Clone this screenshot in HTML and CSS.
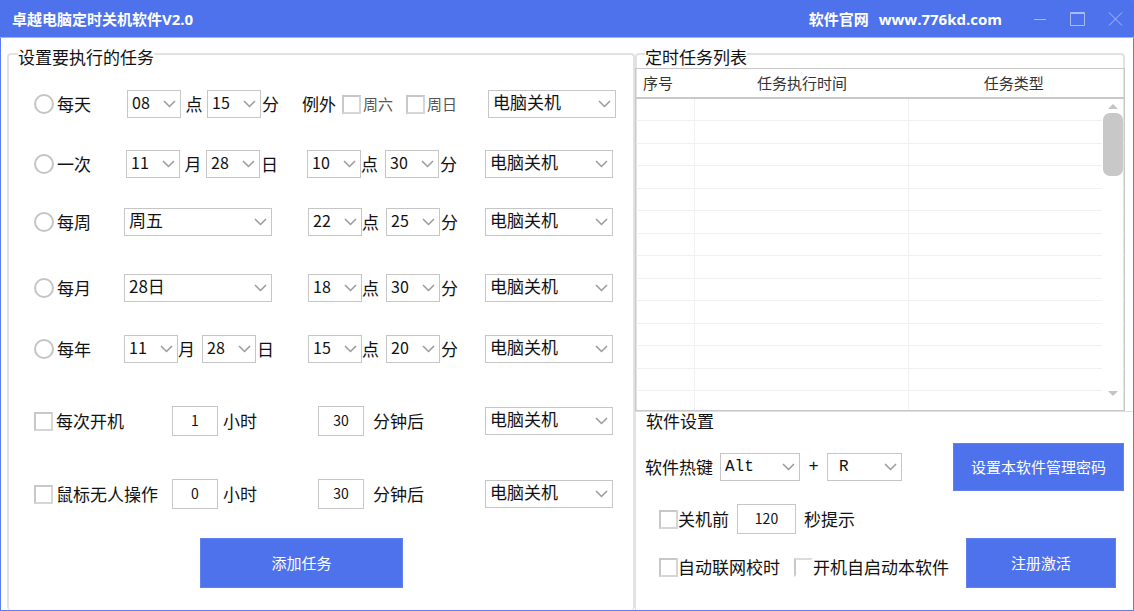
FILE: index.html
```html
<!DOCTYPE html>
<html lang="zh-CN">
<head>
<meta charset="utf-8">
<title>卓越电脑定时关机软件V2.0</title>
<link rel="stylesheet" href="styles.css">
</head>
<body>
<div class="window">
  <header class="titlebar">
    <h1 class="title">卓越电脑定时关机软件V2.0</h1>
    <div class="site"><span>软件官网</span><a href="#">www.776kd.com</a></div>
    <div class="controls">
      <button class="ctl" type="button" aria-label="最小化"><svg width="16" height="16" viewBox="0 0 16 16"><path d="M2 8.500h12"/></svg></button>
      <button class="ctl" type="button" aria-label="最大化"><svg width="16" height="16" viewBox="0 0 16 16"><path d="M.5 1.500h14v13H.5zM.5 2.500h14"/></svg></button>
      <button class="ctl" type="button" aria-label="关闭"><svg width="16" height="16" viewBox="0 0 16 16"><path d="M1 1.500l13 13M14 1.500l-13 13"/></svg></button>
    </div>
  </header>

  <main class="main">
    <fieldset class="group tasks">
      <legend class="legend">设置要执行的任务</legend>

      <div class="row row-daily">
        <label class="opt"><input class="radio" type="radio" name="mode">每天</label>
        <div class="cell">
          <select class="combo num" aria-label="每天 点"><option>08</option></select><span class="unit unit-mid">点</span>
          <select class="combo num" aria-label="每天 分"><option>15</option></select><span class="unit-end">分</span>
        </div>
        <div class="cell except">
          <span>例外</span>
          <label class="opt small"><input class="check" type="checkbox">周六</label>
          <label class="opt small"><input class="check" type="checkbox">周日</label>
        </div>
        <select class="combo action" aria-label="每天 任务类型"><option>电脑关机</option></select>
      </div>

      <div class="row row-once">
        <label class="opt"><input class="radio" type="radio" name="mode">一次</label>
        <div class="cell">
          <select class="combo num" aria-label="一次 月"><option>11</option></select><span class="unit unit-mid">月</span>
          <select class="combo num" aria-label="一次 日"><option>28</option></select><span class="unit-end">日</span>
        </div>
        <div class="cell">
          <select class="combo num" aria-label="一次 点"><option>10</option></select><span class="unit">点</span>
          <select class="combo num" aria-label="一次 分"><option>30</option></select><span class="unit-end">分</span>
        </div>
        <select class="combo action" aria-label="一次 任务类型"><option>电脑关机</option></select>
      </div>

      <div class="row row-weekly">
        <label class="opt"><input class="radio" type="radio" name="mode">每周</label>
        <div class="cell">
          <select class="combo wide" aria-label="星期"><option>周五</option></select>
        </div>
        <div class="cell">
          <select class="combo num" aria-label="每周 点"><option>22</option></select><span class="unit">点</span>
          <select class="combo num" aria-label="每周 分"><option>25</option></select><span class="unit-end">分</span>
        </div>
        <select class="combo action" aria-label="每周 任务类型"><option>电脑关机</option></select>
      </div>

      <div class="row row-monthly">
        <label class="opt"><input class="radio" type="radio" name="mode">每月</label>
        <div class="cell">
          <select class="combo wide" aria-label="日期"><option>28日</option></select>
        </div>
        <div class="cell">
          <select class="combo num" aria-label="每月 点"><option>18</option></select><span class="unit">点</span>
          <select class="combo num" aria-label="每月 分"><option>30</option></select><span class="unit-end">分</span>
        </div>
        <select class="combo action" aria-label="每月 任务类型"><option>电脑关机</option></select>
      </div>

      <div class="row row-yearly">
        <label class="opt"><input class="radio" type="radio" name="mode">每年</label>
        <div class="cell">
          <select class="combo num" aria-label="每年 月"><option>11</option></select><span class="unit">月</span>
          <select class="combo num" aria-label="每年 日"><option>28</option></select><span class="unit-end">日</span>
        </div>
        <div class="cell">
          <select class="combo num" aria-label="每年 点"><option>15</option></select><span class="unit">点</span>
          <select class="combo num" aria-label="每年 分"><option>20</option></select><span class="unit-end">分</span>
        </div>
        <select class="combo action" aria-label="每年 任务类型"><option>电脑关机</option></select>
      </div>

      <div class="row row-delay row-boot">
        <label class="opt"><input class="check" type="checkbox">每次开机</label>
        <label class="delay"><input class="field" type="text" value="1">小时</label>
        <label class="delay minutes"><input class="field" type="text" value="30">分钟后</label>
        <select class="combo action" aria-label="每次开机 任务类型"><option>电脑关机</option></select>
      </div>

      <div class="row row-delay row-idle">
        <label class="opt"><input class="check" type="checkbox">鼠标无人操作</label>
        <label class="delay"><input class="field" type="text" value="0">小时</label>
        <label class="delay minutes"><input class="field" type="text" value="30">分钟后</label>
        <select class="combo action" aria-label="鼠标无人操作 任务类型"><option>电脑关机</option></select>
      </div>

      <button class="btn btn-add" type="button">添加任务</button>
    </fieldset>

    <div class="side">
      <fieldset class="group list">
        <legend class="legend legend-list">定时任务列表</legend>
        <div class="tablebox">
          <table class="table">
            <thead><tr><th class="c-no">序号</th><th class="c-time">任务执行时间</th><th class="c-type">任务类型</th></tr></thead>
            <tbody>
              <tr><td></td><td></td><td></td></tr>
              <tr><td></td><td></td><td></td></tr>
              <tr><td></td><td></td><td></td></tr>
              <tr><td></td><td></td><td></td></tr>
              <tr><td></td><td></td><td></td></tr>
              <tr><td></td><td></td><td></td></tr>
              <tr><td></td><td></td><td></td></tr>
              <tr><td></td><td></td><td></td></tr>
              <tr><td></td><td></td><td></td></tr>
              <tr><td></td><td></td><td></td></tr>
              <tr><td></td><td></td><td></td></tr>
              <tr><td></td><td></td><td></td></tr>
              <tr><td></td><td></td><td></td></tr>
              <tr><td></td><td></td><td></td></tr>
            </tbody>
          </table>
          <div class="scroll" aria-hidden="true">
            <svg class="arrow" width="10" height="5" viewBox="0 0 10 5"><path d="M0 5L5 0l5 5z"/></svg>
            <div class="thumb"></div>
            <svg class="arrow arrow-down" width="10" height="5" viewBox="0 0 10 5"><path d="M0 0h10L5 5z"/></svg>
          </div>
        </div>
      </fieldset>

      <section class="settings">
        <h2 class="heading">软件设置</h2>
        <div class="line hotkey">
          <label for="mod">软件热键</label>
          <select id="mod" class="combo mono mod"><option>Alt</option></select>
          <span class="plus">+</span>
          <select class="combo mono key" aria-label="热键字母"><option>R</option></select>
          <button class="btn btn-pass" type="button">设置本软件管理密码</button>
        </div>
        <div class="line notice">
          <label class="opt tight"><input class="check" type="checkbox">关机前</label>
          <label class="delay"><input class="field seconds" type="text" value="120">秒提示</label>
        </div>
        <div class="line extra">
          <label class="opt tight"><input class="check" type="checkbox">自动联网校时</label>
          <label class="opt tight auto"><input class="check check-open" type="checkbox">开机自启动本软件</label>
          <button class="btn btn-reg" type="button">注册激活</button>
        </div>
      </section>
    </div>
  </main>
</div>
</body>
</html>
```
FILE: styles.css
```css
* {
  box-sizing: border-box;
}

body {
  margin: 0;
  background: #fff;
  color: #111;
  font: 17px/22px "Noto Sans CJK SC", sans-serif;
}

button,
select,
input {
  margin: 0;
  font: inherit;
  color: inherit;
}

.window {
  display: flex;
  flex-direction: column;
  min-height: 100vh;
  border: 1px solid #5c7df0;
  border-top-color: #4d72eb;
}

/* Title bar */
.titlebar {
  display: flex;
  align-items: center;
  height: 37px;
  margin: 0 -1px;
  padding: 0 10px 0 12px;
  background: #4d72eb;
  border-bottom: 1px solid #9db3f6;
  color: #fff;
  font: bold 15px/22px "Open Sans", "Noto Sans CJK SC", sans-serif;
}

.title {
  flex: 1;
  margin: 0;
  font: inherit;
}

.site {
  display: flex;
  gap: 10px;
}

.site a {
  color: inherit;
  text-decoration: none;
}

.controls {
  display: flex;
  gap: 22px;
  margin-left: 30px;
}

.ctl {
  display: flex;
  padding: 0;
  border: 0;
  background: none;
}

.ctl svg {
  fill: none;
  stroke: #a9bbf7;
}

/* Two panes */
.main {
  flex: 1;
  display: grid;
  grid-template-columns: 628fr 498fr;
  padding: 1px 0 0 6px;
}

.group {
  min-width: 0;
  margin: 0;
  padding: 0;
  border: 2px solid #e2e2e2;
  border-radius: 4px;
}

.legend {
  margin-left: 9px;
  padding: 7px 0 0;
}

.tasks {
  border-bottom: 0;
}

/* Task rows */
.row {
  display: grid;
  grid-template-columns: 90px 184px 177px 1fr;
  align-items: center;
  height: 30px;
  margin-left: 25px;
}

.row-daily {
  grid-template-columns: 93px 175px 186px 1fr;
  margin-top: 21px;
}

.row-once {
  grid-template-columns: 92px 181px 178px 1fr;
  margin-top: 30px;
}

.row-weekly {
  margin-top: 28px;
}

.row-monthly {
  margin-top: 36px;
}

.row-yearly {
  margin-top: 31px;
}

.row-delay {
  grid-template-columns: 138px 146px 167px 1fr;
  margin-top: 42px;
}

.row-idle {
  margin-top: 43px;
}

.cell,
.delay,
.opt {
  display: flex;
  align-items: center;
  white-space: nowrap;
}

.opt {
  gap: 3px;
}

.delay {
  gap: 5px;
}

.minutes {
  gap: 9px;
}

.tight {
  gap: 0;
}

.except {
  gap: 6px;
}

.small {
  gap: 2px;
  margin-right: 7px;
  color: #555;
  font-size: 15px;
}

.unit {
  width: 24px;
}

.unit-mid {
  width: 26px;
  text-align: center;
}

.unit-end {
  margin-left: 1px;
}

.radio,
.check {
  flex: none;
  appearance: none;
  width: 20px;
  height: 20px;
  border: 2px solid #c4c4c4;
  background: #fff;
}

.radio {
  border-radius: 50%;
}

.check {
  width: 19px;
  height: 19px;
  border-color: #c8c8c8 #d6d6d6 #d6d6d6 #c8c8c8;
}

.check-open {
  border-color: #dcdcdc transparent transparent #c8c8c8;
}

.combo {
  appearance: none;
  height: 28px;
  padding: 0 20px 4px 4px;
  border: 1px solid #c6c6c6;
  border-radius: 0;
  background: #fff url("data:image/svg+xml,%3Csvg xmlns='http://www.w3.org/2000/svg' width='13' height='8'%3E%3Cpath d='M1 1l5.500 5.500L12 1' fill='none' stroke='%23999' stroke-width='1.500'/%3E%3C/svg%3E") no-repeat right 4px center;
  line-height: 22px;
}

.num {
  width: 54px;
  padding-right: 16px;
  font-size: 16px;
}

.wide {
  width: 148px;
}

.action {
  width: 128px;
}

.mono {
  padding-bottom: 1px;
  font-family: "Liberation Mono", monospace;
  font-size: 16px;
}

.field {
  width: 46px;
  height: 30px;
  padding: 0 0 2px;
  border: 1px solid #c6c6c6;
  background: #fff;
  font-size: 14px;
  line-height: 20px;
  text-align: center;
}

.btn {
  height: 48px;
  padding: 0;
  border: 1px solid #5f80ee;
  background: #4d72eb;
  color: #fff;
  font-size: 15px;
}

.btn-add {
  display: block;
  width: 203px;
  height: 50px;
  margin: 29px 0 0 191px;
}

/* Task list */
.side {
  display: flex;
  flex-direction: column;
}

.list {
  margin-right: 8px;
  border-bottom: 0;
}

.legend-list {
  margin-left: 8px;
}

.tablebox {
  position: relative;
  margin: 0 -2px;
  border: 1px solid #c8c8c8;
}

.table {
  width: 100%;
  border-collapse: separate;
  border-spacing: 0;
  table-layout: fixed;
  font-size: 15px;
}

.table th {
  height: 30px;
  padding: 0;
  border-bottom: 2px solid #c8c8c8;
  color: #333;
  font-weight: normal;
}

.c-no {
  width: 12%;
}

.table th.c-no {
  padding-left: 7px;
  text-align: left;
}

.c-time {
  width: 44%;
}

.table th.c-type {
  padding-right: 6px;
}

.table td {
  height: 23px;
  padding: 0;
  border: 1px solid #f0f0f0;
  border-width: 0 1px 1px 0;
}

.table tr:nth-child(odd) td {
  height: 22px;
}

.table td:last-child {
  border-right: 0;
}

.table tr:last-child td {
  height: 19px;
  border-bottom: 0;
}

.scroll {
  position: absolute;
  top: 30px;
  right: 1px;
  bottom: 0;
  display: flex;
  flex-direction: column;
  align-items: center;
  gap: 4px;
  width: 21px;
  padding: 5px 0 14px;
  background: #fff;
}

.arrow {
  fill: #c4c4c4;
}

.arrow-down {
  margin-top: auto;
}

.thumb {
  width: 20px;
  height: 63px;
  border-radius: 7px;
  background: #c8c8c8;
}

/* Settings */
.settings {
  flex: 1;
  border-top: 1px solid #dedede;
  border-left: 1px solid #e2e2e2;
}

.heading {
  margin: 0 0 0 10px;
  font: inherit;
  line-height: 18px;
}

.line {
  display: flex;
  align-items: center;
}

.hotkey {
  margin: 13px 9px 0 9px;
}

.mod {
  width: 80px;
  margin-left: 7px;
}

.plus {
  width: 27px;
  font-family: "Liberation Mono", monospace;
  text-align: center;
}

.key {
  width: 75px;
  padding-left: 11px;
}

.btn-pass {
  width: 171px;
  margin-left: auto;
}

.notice {
  gap: 8px;
  margin: 13px 0 0 23px;
}

.notice .delay {
  gap: 8px;
}

.seconds {
  width: 59px;
}

.extra {
  align-items: flex-end;
  margin: 4px 17px 0 23px;
}

.extra .opt {
  padding-bottom: 10px;
}

.auto {
  margin-left: 14px;
}

.btn-reg {
  width: 150px;
  height: 50px;
  margin-left: auto;
}
```
